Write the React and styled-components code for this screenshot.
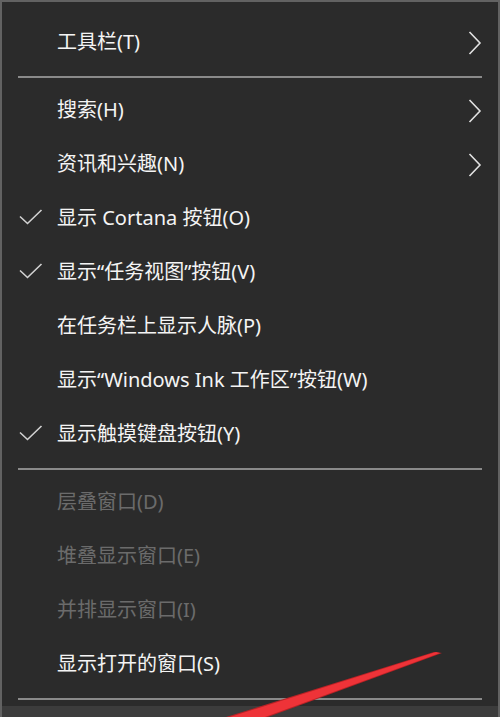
import React from 'react';
import styled, { createGlobalStyle } from "styled-components"

const items = [
    { label: "工具栏(T)", submenu: true },
    { divider: true },
    { label: "搜索(H)", submenu: true },
    { label: "资讯和兴趣(N)", submenu: true },
    { label: "显示 Cortana 按钮(O)", checked: true },
    { label: "显示“任务视图”按钮(V)", checked: true },
    { label: "在任务栏上显示人脉(P)" },
    { label: "显示“Windows Ink 工作区”按钮(W)" },
    { label: "显示触摸键盘按钮(Y)", checked: true },
    { divider: true },
    { label: "层叠窗口(D)", disabled: true },
    { label: "堆叠显示窗口(E)", disabled: true },
    { label: "并排显示窗口(I)", disabled: true },
    { label: "显示打开的窗口(S)" },
    { divider: true },
]

const App = () => (
<>
    <Global />
    <Menu>
        {items.map((item, i) => item.divider
            ? <Divider key={i} />
            : <MenuItem key={i} {...item} />
        )}
        {/* next entry is hovered, only its top edge shows */}
        <HoverStrip />
        <Arrow />
    </Menu>
</>
)

const MenuItem = ({ label, submenu, checked, disabled }) => (
    <Row>
        <Mark>{checked && <Check />}</Mark>
        <Label $disabled={disabled}>{label}</Label>
        <Side>{submenu && <Chevron />}</Side>
    </Row>
)

const Check = () => (
    <svg width="24" height="16" viewBox="0 0 24 16">
        <path d="M1 7.5 L8.5 14.5 L22.5 1" fill="none" stroke="#d2d2d2" strokeWidth="1.6" />
    </svg>
)

const Chevron = () => (
    <svg width="14" height="24" viewBox="0 0 14 24">
        <path d="M1.5 1 L12 12 L1.5 23" fill="none" stroke="#e2e2e2" strokeWidth="1.6" />
    </svg>
)

// red annotation pointing at the bottom entry
const Arrow = () => (
    <ArrowLayer width="500" height="717" viewBox="0 0 500 717">
        <polygon points="434,652 442,653 268,717 226,717" fill="#b82226" />
        <polygon points="436,652 440,653 265,717 230,717" fill="#ee3338" />
    </ArrowLayer>
)

const Global = createGlobalStyle`
body {
    margin: 0;
    background-color: #2b2b2b;
    overflow: hidden;
}
`

const Menu = styled.div`
position: relative;
box-sizing: border-box;
width: 500px;
height: 717px;
overflow: hidden;
background-color: #2b2b2b;
border: 2px solid #626262;
border-bottom: none;
padding-top: 14px;
font-family: "Noto Sans", "Noto Sans CJK SC", sans-serif;
`

const Row = styled.div`
display: grid;
grid-template-columns: 55px 1fr 30px;
align-items: center;
height: 54px;
`

const HoverStrip = styled.div`
height: 54px;
background-color: #3c3c3c;
`

const Mark = styled.div`
display: flex;
align-items: center;
padding-left: 17px;
margin-bottom: 4px;
`

const Label = styled.div`
font-size: 20px;
line-height: 24px;
margin-bottom: 3px;
color: ${p => p.$disabled ? "#6b6b6b" : "#f4f4f4"};
white-space: nowrap;
`

const Side = styled.div`
display: flex;
align-items: center;
`

const Divider = styled.div`
height: 2px;
margin: 6px 16px;
background-color: #8a8a8a;
`

const ArrowLayer = styled.svg`
position: absolute;
left: -2px;
top: -2px;
pointer-events: none;
`

export default App
